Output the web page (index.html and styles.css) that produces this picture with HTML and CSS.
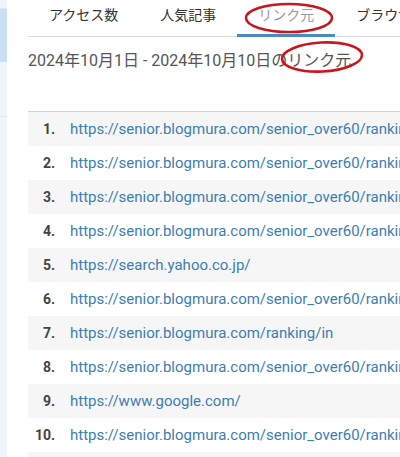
FILE: index.html
```html
<!DOCTYPE html>
<html lang="ja">

<head>
    <meta charset="UTF-8">
    <meta name="viewport" content="width=device-width, initial-scale=1.0">
    <title>リンク元</title>
    <link rel="stylesheet" href="styles.css">
</head>

<body>

    <div id="page">
        <div id="sidebar">
            <div class="side-item side-top"></div>
            <div class="side-item side-active"></div>
            <div class="side-item side-rest"></div>
        </div>

        <div id="main">
            <div id="tabs">
                <div class="tab">アクセス数</div>
                <div class="tab">人気記事</div>
                <div class="tab active">リンク元</div>
                <div class="tab">ブラウザ</div>
            </div>

            <p id="period">2024年10月1日 - 2024年10月10日のリンク元</p>

            <ol id="ref-list">
                <li><span class="num">1.</span><span class="url">https://senior.blogmura.com/senior_over60/ranking/in</span></li>
                <li><span class="num">2.</span><span class="url">https://senior.blogmura.com/senior_over60/ranking/in</span></li>
                <li><span class="num">3.</span><span class="url">https://senior.blogmura.com/senior_over60/ranking/in</span></li>
                <li><span class="num">4.</span><span class="url">https://senior.blogmura.com/senior_over60/ranking/in</span></li>
                <li><span class="num">5.</span><span class="url">https://search.yahoo.co.jp/</span></li>
                <li><span class="num">6.</span><span class="url">https://senior.blogmura.com/senior_over60/ranking/in</span></li>
                <li><span class="num">7.</span><span class="url">https://senior.blogmura.com/ranking/in</span></li>
                <li><span class="num">8.</span><span class="url">https://senior.blogmura.com/senior_over60/ranking/in</span></li>
                <li><span class="num">9.</span><span class="url">https://www.google.com/</span></li>
                <li><span class="num">10.</span><span class="url">https://senior.blogmura.com/senior_over60/ranking/in</span></li>
                <li><span class="num">11.</span><span class="url">https://senior.blogmura.com/senior_over60/ranking/in</span></li>
            </ol>

            <!-- red marker circles drawn over the screenshot -->
            <svg class="mark" id="mark-tab" width="92" height="34" viewBox="0 0 92 34">
                <ellipse cx="46" cy="17" rx="43" ry="14" />
            </svg>
            <svg class="mark" id="mark-title" width="86" height="36" viewBox="0 0 86 36">
                <ellipse cx="43" cy="18" rx="40" ry="14.5" transform="rotate(-3 43 18)" />
            </svg>
        </div>
    </div>

</body>

</html>
```

FILE: styles.css
```css
body {
    font-family: Roboto, "Noto Sans CJK JP", sans-serif;
    background-color: #fff;
    margin: 0;
    padding: 0;
    overflow: hidden;
}

#page {
    display: flex;
    height: 457px;
}

#sidebar {
    width: 7px;
    flex-shrink: 0;
    background-color: #eef5fc;
}

.side-top {
    height: 8px;
    border-bottom: 1px solid #dfe8f2;
}

.side-active {
    height: 53px;
    background-color: #c9dff6;
}

.side-rest {
    height: 54px;
    border-bottom: 1px solid #dde6ef;
}

#main {
    position: relative;
    flex: 1;
    padding-left: 21px;
    overflow: hidden;
}

#tabs {
    display: flex;
    border-bottom: 1px solid #dcdcdc;
    white-space: nowrap;
}

.tab {
    flex-shrink: 0;
    padding: 5px 21px 9px;
    line-height: 20px;
    font-size: 14px;
    color: #333;
    border-bottom: 3px solid transparent;
    margin-bottom: -1px;
}

.tab.active {
    color: #9a9a9a;
    border-bottom-color: #4a8cc0;
}

#period {
    margin: 12px 0 0;
    font-size: 16px;
    line-height: 24px;
    color: #555;
    white-space: nowrap;
}

#ref-list {
    list-style: none;
    margin: 38px 0 0;
    padding: 0;
    border-top: 1px solid #d4d4d4;
}

#ref-list li {
    display: flex;
    align-items: center;
    height: 34px;
    white-space: nowrap;
}

#ref-list li:nth-child(odd) {
    background-color: #f6f6f6;
}

.num {
    width: 27px;
    flex-shrink: 0;
    text-align: right;
    font-size: 14px;
    font-weight: bold;
    color: #444;
}

.url {
    margin-left: 15px;
    font-size: 15px;
    color: #3d7eb1;
}

.mark {
    position: absolute;
    fill: none;
    stroke: #c8161e;
    stroke-width: 2.6px;
}

#mark-tab {
    left: 236px;
    top: 1px;
}

#mark-title {
    left: 272px;
    top: 39px;
}
```
